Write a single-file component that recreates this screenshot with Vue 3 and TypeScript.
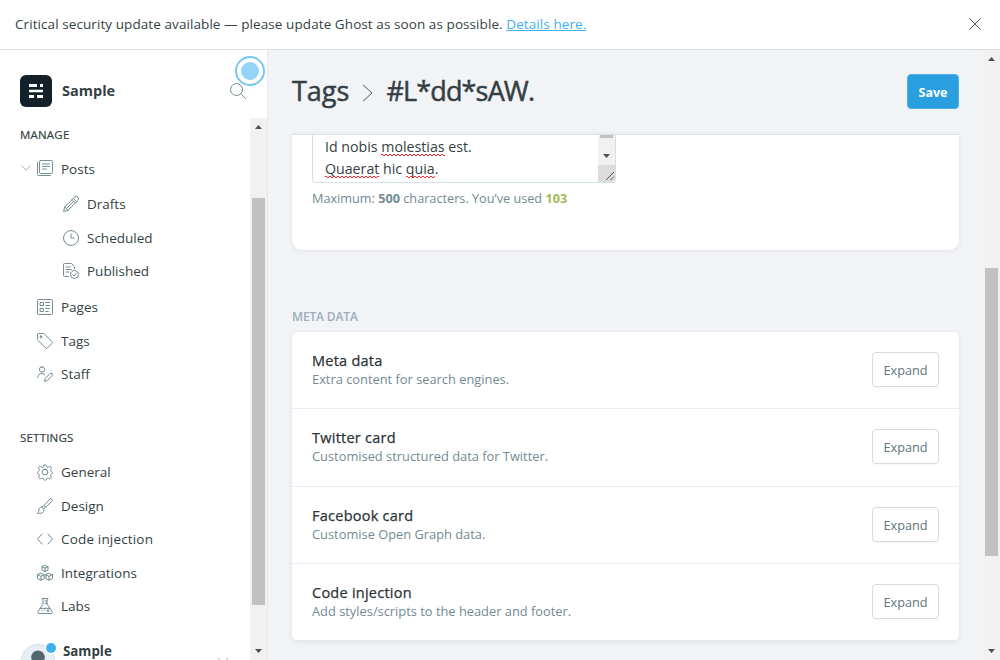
<script setup lang="ts">
interface NavItem { label: string; icon: string; wide?: boolean }
interface Section { title: string; text: string }

const posts: NavItem[] = [
  { label: 'Drafts', icon: 'pencil' },
  { label: 'Scheduled', icon: 'clock' },
  { label: 'Published', icon: 'published' },
]
const manage: NavItem[] = [
  { label: 'Pages', icon: 'pages' },
  { label: 'Tags', icon: 'tag' },
  { label: 'Staff', icon: 'staff' },
]
const settings: NavItem[] = [
  { label: 'General', icon: 'gear' },
  { label: 'Design', icon: 'brush' },
  { label: 'Code injection', icon: 'code', wide: true },
  { label: 'Integrations', icon: 'cubes' },
  { label: 'Labs', icon: 'flask' },
]
const sections: Section[] = [
  { title: 'Meta data', text: 'Extra content for search engines.' },
  { title: 'Twitter card', text: 'Customised structured data for Twitter.' },
  { title: 'Facebook card', text: 'Customise Open Graph data.' },
  { title: 'Code injection', text: 'Add styles/scripts to the header and footer.' },
]

// Outline paths on a 24 unit grid
const icons: Record<string, string[]> = {
  posts: [
    'M5.2 .8h16.6a1.4 1.4 0 0 1 1.4 1.4v16.6a1.4 1.4 0 0 1-1.4 1.4H5.2a1.4 1.4 0 0 1-1.4-1.4V2.2A1.4 1.4 0 0 1 5.2.8z',
    'M.8 3.8v18a1.4 1.4 0 0 0 1.4 1.4h18M8.2 6h10.6M8.2 9.7h10.6M8.2 13.5h6',
  ],
  pencil: [
    'M22.2 1.8a3.5 3.5 0 0 0-5 0L2.6 16.4.8 23.2l6.8-1.8L22.2 6.8a3.5 3.5 0 0 0 0-5z',
    'M15.5 3.5l5 5M13.5 5.5l5 5M2.6 16.4l5 5M5.1 18.9L16 8',
  ],
  clock: ['M12 .8a11.2 11.2 0 1 0 0 22.4A11.2 11.2 0 0 0 12 .8z', 'M12 5.8V12h5'],
  published: [
    'M8.2 20.2h-6A1.4 1.4 0 0 1 .8 18.8V2.2A1.4 1.4 0 0 1 2.2.8h10.6l4.4 4.4v3M4.5 6h6M4.5 9.8h8M4.5 13.5h4',
    'M17.2 11.2a6 6 0 1 0 0 12 6 6 0 0 0 0-12z',
    'M20 15.3l-3.4 4.3-2-2',
  ],
  pages: [
    'M2.2 .8h19.6a1.4 1.4 0 0 1 1.4 1.4v19.6a1.4 1.4 0 0 1-1.4 1.4H2.2a1.4 1.4 0 0 1-1.4-1.4V2.2A1.4 1.4 0 0 1 2.2.8z',
    'M5.2 5.2h4.5v4.5H5.2zM5.2 14.2h4.5v4.5H5.2zM13 5.2h6M13 9.7h6M13 14.2h6M13 18.7h4',
  ],
  tag: [
    'M.8 2.2v7.2a2 2 0 0 0 .6 1.4l11.8 11.8a1.6 1.6 0 0 0 2.3 0l7.2-7.2a1.6 1.6 0 0 0 0-2.3L10.8 1.4A2 2 0 0 0 9.4.8H2.2A1.4 1.4 0 0 0 .8 2.2z',
    'M6 4.5a1.5 1.5 0 1 0 0 3 1.5 1.5 0 0 0 0-3z',
  ],
  staff: [
    'M7.5 1.2a4 4 0 1 0 0 8 4 4 0 0 0 0-8z',
    'M.8 17.2a6.8 6.8 0 0 1 10.8-4.7',
    'M22.5 11.5a2.2 2.2 0 0 0-3.1 0l-7 7-1.2 4.5 4.5-1.2 6.8-7.2a2.2 2.2 0 0 0 0-3.1z',
  ],
  gear: [
    'M10.5 1.9l-.5 1.5a2.3 2.3 0 0 1-3 1.3l-1.7-.8a2.1 2.1 0 0 0-2.7 2.7l.8 1.7a2.3 2.3 0 0 1-1.3 3l-.4.2a1.6 1.6 0 0 0 0 3l.4.2a2.3 2.3 0 0 1 1.3 3l-.8 1.7a2.1 2.1 0 0 0 2.7 2.7l1.7-.8a2.3 2.3 0 0 1 3 1.3l.5 1a1.7 1.7 0 0 0 3 0l.5-1a2.3 2.3 0 0 1 3-1.3l1.7.8a2.1 2.1 0 0 0 2.7-2.7l-.8-1.7a2.3 2.3 0 0 1 1.3-3l.4-.2a1.6 1.6 0 0 0 0-3l-.4-.2a2.3 2.3 0 0 1-1.3-3l.8-1.7a2.1 2.1 0 0 0-2.7-2.7l-1.7.8a2.3 2.3 0 0 1-3-1.3l-.5-1.5a1.7 1.7 0 0 0-3 0z',
    'M12 7.8a4.3 4.3 0 1 0 0 8.6 4.3 4.3 0 0 0 0-8.6z',
  ],
  brush: [
    'M9.5 12.3L19.4 1.7a2.3 2.3 0 0 1 3.2 3.2L12 14.7l-2 1.6-2.5-2.4z',
    'M8 13.5c-2-.3-4.2.7-4.8 3-.6 2.2-.2 4.2-2.4 6.5 4 .5 8.2-.2 9.4-3 .7-1.5.4-3-.2-3.9M10.5 11.5l2.5 2.5',
  ],
  code: ['M7.5 4.5L.8 12l6.7 7.5M16.5 4.5l6.7 7.5-6.7 7.5'],
  cubes: [
    'M12 .8l4.5 1.9v5L12 9.8 7.5 7.7v-5zM7.5 2.7L12 4.8l4.5-2.1M12 4.8v5',
    'M6 12.6l4.8 2v5.7L6 22.8l-5.2-2.5v-5.7zM.8 14.6L6 17l4.8-2.4M6 17v5.8',
    'M18 12.6l5.2 2v5.7L18 22.8l-4.8-2.5v-5.7zM13.2 14.6L18 17l5.2-2.4M18 17v5.8',
  ],
  flask: [
    'M7.5 .8h9M9 .8v8.5L1.2 20.5a1.7 1.7 0 0 0 1.4 2.7h18.8a1.7 1.7 0 0 0 1.4-2.7L15 9.3V.8M4.5 15.5h15',
    'M12 4.5h3M12 8h3M7.5 19h.5M11 17.8h.5M15 19h3M16.5 17.5v3',
  ],
}
</script>

<template>
  <div class="app">
    <header class="alert">
      <p>Critical security update available — please update Ghost as soon as possible. <a>Details here.</a></p>
      <svg class="close" viewBox="0 0 12 12"><path d="M.4.4l11.2 11.2M11.6.4L.4 11.6" /></svg>
    </header>

    <div class="body">
      <aside class="side">
        <div class="brand">
          <svg class="logo" viewBox="0 0 32 32">
            <rect width="32" height="32" rx="6" fill="#15212a" />
            <path fill="#fff" d="M9 9h8v3H9zM20 9h3v3h-3zM9 14.700h14v2.600H9zM9 20h5v3H9zM17 20h6v3h-6z" />
          </svg>
          <strong>Sample</strong>
          <svg class="search icon" viewBox="0 0 24 24"><circle cx="9.8" cy="9.8" r="9" /><path d="M16.2 16.2l7 7" /></svg>
          <span class="beacon"></span>
        </div>

        <div class="scroller">
          <nav>
            <h4>Manage</h4>
            <div class="row posts">
              <svg class="chev" viewBox="0 0 10 6"><path d="M.5.7L5 5.2 9.5.7" /></svg>
              <svg class="icon" viewBox="0 0 24 24"><path v-for="d in icons.posts" :key="d" :d="d" /></svg>
              <span>Posts</span>
            </div>
            <div class="sub">
              <div v-for="n in posts" :key="n.label" class="row">
                <svg class="icon" viewBox="0 0 24 24"><path v-for="d in icons[n.icon]" :key="d" :d="d" /></svg>
                <span>{{ n.label }}</span>
              </div>
            </div>
            <div v-for="n in manage" :key="n.label" class="row">
              <svg class="icon" viewBox="0 0 24 24"><path v-for="d in icons[n.icon]" :key="d" :d="d" /></svg>
              <span>{{ n.label }}</span>
            </div>
            <h4 class="second">Settings</h4>
            <div v-for="n in settings" :key="n.label" class="row" :class="{ wide: n.wide }">
              <svg class="icon" viewBox="0 0 24 24"><path v-for="d in icons[n.icon]" :key="d" :d="d" /></svg>
              <span>{{ n.label }}</span>
            </div>
            <div class="user">
              <svg class="avatar" viewBox="0 0 36 36">
                <circle cx="17" cy="18" r="16.5" fill="#e5eff5" stroke="#d3dfe6" />
                <circle cx="17" cy="14.3" r="6.8" fill="#54666f" />
                <circle cx="30" cy="5" r="6.5" fill="#fff" />
                <circle cx="30" cy="5" r="5" fill="#3eb0ef" />
              </svg>
              <strong>Sample</strong>
              <svg class="chev down" viewBox="0 0 12 7"><path d="M.5.7L6 6.2 11.5.7" /></svg>
            </div>
          </nav>
          <div class="bar side-bar">
            <svg viewBox="0 0 7 4"><path d="M0 4h7L3.5 0z" /></svg>
            <i></i>
            <svg viewBox="0 0 7 4"><path d="M0 0h7L3.5 4z" /></svg>
          </div>
        </div>
      </aside>

      <main>
        <div class="content">
          <div class="head">
            <h1><span class="crumb">Tags</span><svg viewBox="0 0 11 18"><path d="M1 .8L10 9 1 17.2" /></svg><span class="tag">#L*dd*sAW.</span></h1>
            <button class="save">Save</button>
          </div>
          <div class="card form">
            <div class="area">
              <div class="lines">
                <div>Id nobis <u>molestias</u> est.</div>
                <div><u>Quaerat</u> hic <u>quia</u>.</div>
              </div>
              <div class="mini">
                <i></i>
                <svg class="arrow" viewBox="0 0 7 4"><path d="M0 0h7L3.5 4z" /></svg>
                <div class="grip"><svg viewBox="0 0 10 10"><path d="M1 9L9 1M5.5 9L9 5.5" /></svg></div>
              </div>
            </div>
            <p class="hint">Maximum: <b>500</b> characters. You’ve used <b class="ok">103</b></p>
          </div>
          <h5>Meta data</h5>
          <div class="card list">
            <section v-for="s in sections" :key="s.title">
              <div>
                <h3>{{ s.title }}</h3>
                <p>{{ s.text }}</p>
              </div>
              <button>Expand</button>
            </section>
          </div>
        </div>
        <div class="bar main-bar">
          <svg viewBox="0 0 7 4"><path d="M0 4h7L3.5 0z" /></svg>
          <i></i>
          <svg viewBox="0 0 7 4"><path d="M0 0h7L3.5 4z" /></svg>
        </div>
      </main>
    </div>
  </div>
</template>

<style>
html, body { margin: 0; overflow: hidden; }
</style>

<style scoped>
* { box-sizing: border-box; }
h1, h3, h4, h5, p { margin: 0; }
svg { flex: none; display: block; }
.app {
  width: 1000px; height: 660px; overflow: hidden; display: flex; flex-direction: column;
  font-family: "Open Sans", "Noto Sans", sans-serif; color: #343f44; background: #fff; font-size: 14px;
}
.alert { height: 50px; flex: none; display: flex; align-items: center; justify-content: space-between; padding: 0 19px 0 15px; border-bottom: 1px solid #dadfe2; }
.alert p { font-size: 13.5px; letter-spacing: .08px; line-height: 20px; padding-bottom: 2px; white-space: nowrap; }
.alert a { color: #3eb0ef; text-decoration: underline; }
.close { width: 12px; height: 12px; margin-top: -1px; fill: none; stroke: #50585d; stroke-width: 1; }
.body { flex: 1; min-height: 0; display: flex; }
.side { width: 268px; flex: none; border-right: 1px solid #e5e9ef; display: flex; flex-direction: column; }
.brand { position: relative; height: 68px; flex: none; display: flex; align-items: center; padding: 14px 21px 0 20px; }
.brand strong { margin-left: 10px; flex: 1; font-size: 14.5px; font-weight: 700; line-height: 20px; padding-bottom: 1px; }
.logo { width: 32px; height: 32px; }
.icon { width: 16px; height: 16px; fill: none; stroke: #738a94; stroke-width: 1.5; stroke-linecap: round; stroke-linejoin: round; overflow: visible; }
.beacon { position: absolute; left: 235px; top: 6px; width: 30px; height: 30px; border-radius: 50%; border: 2px solid #74c7f5; display: grid; place-items: center; }
.beacon::before { content: ""; width: 18px; height: 18px; border-radius: 50%; background: #95d3f8; }
.scroller { flex: 1; min-height: 0; display: flex; overflow: hidden; }
nav { flex: 1; overflow: hidden; }
h4 { height: 34.2px; line-height: 34px; padding-left: 20px; font-size: 11.5px; font-weight: 400; -webkit-text-stroke: .2px; text-transform: uppercase; letter-spacing: .2px; }
h4.second { margin-top: 30px; }
.row { height: 33.6px; display: flex; align-items: center; gap: 8px; padding-left: 37px; white-space: nowrap; font-size: 13.5px; }
.row span { line-height: 20px; }
.wide span { letter-spacing: .17px; }
.posts { padding-left: 21px; gap: 0; }
.posts .icon { margin: -2px 8px 0 6px; }
.posts .chev { margin-top: -1px; }
.sub { margin: 1.4px 0 2.2px 26px; }
.chev { width: 10px; height: 6px; fill: none; stroke: #a3b3bb; }
.user { display: flex; align-items: flex-start; margin: 19.8px 0 0 21px; }
.avatar { width: 36px; height: 36px; }
.user strong { margin: -1px 0 0 6px; line-height: 18px; font-size: 13.3px; }
.chev.down { margin: 14px 0 0 105px; width: 12px; height: 7px; }
.bar { width: 17px; flex: none; background: #f1f1f1; display: flex; flex-direction: column; align-items: center; }
.bar svg { width: 7px; height: 4px; fill: #505050; }
.bar i { width: 13px; background: #c1c1c1; }
.side-bar { padding-top: 7px; }
.side-bar i { height: 407px; margin: 69px 0 44px; }
.main-bar { padding-top: 7px; }
.main-bar i { height: 288px; margin: 207px 0 93px; }
main { flex: 1; min-width: 0; display: flex; background: #f2f3f7; }
.content { flex: 1; padding: 0 24px; overflow: hidden; }
.head { height: 84px; display: flex; align-items: center; justify-content: space-between; }
h1 { display: flex; align-items: center; font-size: 27px; font-weight: 400; -webkit-text-stroke: .5px; line-height: 36px; margin-top: -3px; }
h1 .tag { letter-spacing: -.85px; }
h1 svg { width: 11px; height: 18px; margin: 5px 13px 0; fill: none; stroke: #50585d; }
.save { width: 52px; height: 35px; border: 1px solid #4db2ea; border-radius: 4px; background: #2a9fe0; color: #fff; font: 700 12.5px "Open Sans", sans-serif; padding: 1px 0 0; margin-top: -1px; }
.card { background: #fff; box-shadow: 0 1px 5px rgba(20, 40, 60, .08); }
.form { height: 116px; border-top: 1px solid #d5e3ec; border-radius: 0 0 10px 10px; padding: 0 20px; }
.area { width: 304px; height: 48px; border: 1px solid #d3e2e9; border-top: 0; border-radius: 0 0 4px 4px; display: flex; justify-content: space-between; overflow: hidden; }
.lines { padding: 1px 0 0 12px; font-size: 14.2px; line-height: 22px; white-space: nowrap; }
/* Spelling squiggle: two dashed rows, offset by half a period */
.lines u {
  text-decoration: none;
  background-image: linear-gradient(90deg, #f22 50%, transparent 50%), linear-gradient(90deg, #f22 50%, transparent 50%);
  background-size: 4px 1px;
  background-repeat: repeat-x;
  background-position: 0 calc(100% - 1px), 2px 100%;
}
.mini { width: 17px; background: #f1f1f1; display: flex; flex-direction: column; align-items: center; }
.mini i { width: 13px; height: 3px; background: #c1c1c1; }
.arrow { width: 7px; height: 4px; margin: 16px 0 7px; fill: #505050; }
.grip { width: 17px; height: 17px; background: #dcdcdc; padding: 6px 0 0 7px; }
.grip svg { width: 10px; height: 10px; stroke: #555; fill: none; }
.hint { margin-top: 5px; font-size: 12.7px; line-height: 20px; color: #738a94; white-space: nowrap; }
.hint b { font-weight: 700; }
.hint .ok { color: #9fbb58; }
h5 { margin-top: 57px; height: 25px; line-height: 20px; font-size: 12px; letter-spacing: -.15px; font-weight: 600; color: #9baeb8; text-transform: uppercase; }
.list { height: 309px; border-radius: 5px; border-bottom: 1px solid #dfe9ef; }
section { height: 77.4px; padding: 0 20px; display: flex; align-items: center; justify-content: space-between; border-bottom: 1px solid #e5eff5; }
section:last-child { border-bottom: 0; height: 76.6px; }
section h3 { font-size: 14.5px; line-height: 19px; margin-top: -.7px; font-weight: 400; -webkit-text-stroke: .25px; letter-spacing: .25px; color: #2b3338; }
section p { font-size: 12.85px; line-height: 19px; color: #738a94; white-space: nowrap; }
section button { width: 67px; height: 35px; margin-top: -1.4px; padding: 1px 0 0; background: #fff; border: 1px solid #d3dde3; border-radius: 4px; color: #5f747d; font: 400 12.7px "Open Sans", sans-serif; box-shadow: 0 1px 2px rgba(0, 0, 0, .04); }
</style>
